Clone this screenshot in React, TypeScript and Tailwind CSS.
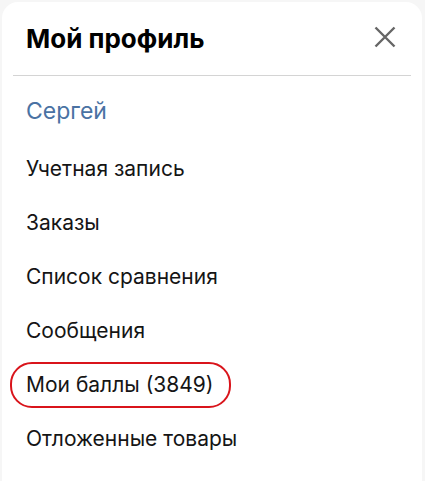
import React from "react";

export default function App() {
  const items = ["Учетная запись", "Заказы", "Список сравнения", "Сообщения"];
  return (
    <div className="w-[425px] h-[481px] bg-[#f6f6f6] pt-[2px] pl-[2px] pr-[3px] overflow-hidden" style={{ fontFamily: "Inter, 'Noto Sans', sans-serif" }}>
      <div className="h-[500px] bg-white rounded-[16px] px-[11px]">
        <div className="flex items-center justify-between h-[73px] pl-[13px] pr-[15px]">
          <h1 className="text-[26px] leading-none font-bold text-black">Мой профиль</h1>
          <svg width="22" height="22" viewBox="0 0 22 22" className="text-[#666] -mt-[4px]">
            <path d="M1.5 1.5L20.5 20.5M20.5 1.5L1.5 20.5" stroke="currentColor" strokeWidth="2.4" />
          </svg>
        </div>
        <div className="h-px bg-[#d4d4d4]" />
        <div className="flex flex-col pl-[13px]">
          <div className="h-[40px] mt-[15px] mb-[11px] flex items-center text-[23px] text-[#4a72a3]">Сергей</div>
          {items.map((t) => (
            <div key={t} className="h-[54px] flex items-center text-[21px] text-[#151515]">{t}</div>
          ))}
          <div className="h-[54px] flex items-center -ml-[16px]">
            <div className="h-[46px] w-[221px] flex items-center pl-[14px] border-2 border-[#d9141b] rounded-[22px] text-[21px] text-[#151515]">Мои баллы (3849)</div>
          </div>
          <div className="h-[54px] flex items-center text-[21px] text-[#151515]">Отложенные товары</div>
        </div>
      </div>
    </div>
  );
}
